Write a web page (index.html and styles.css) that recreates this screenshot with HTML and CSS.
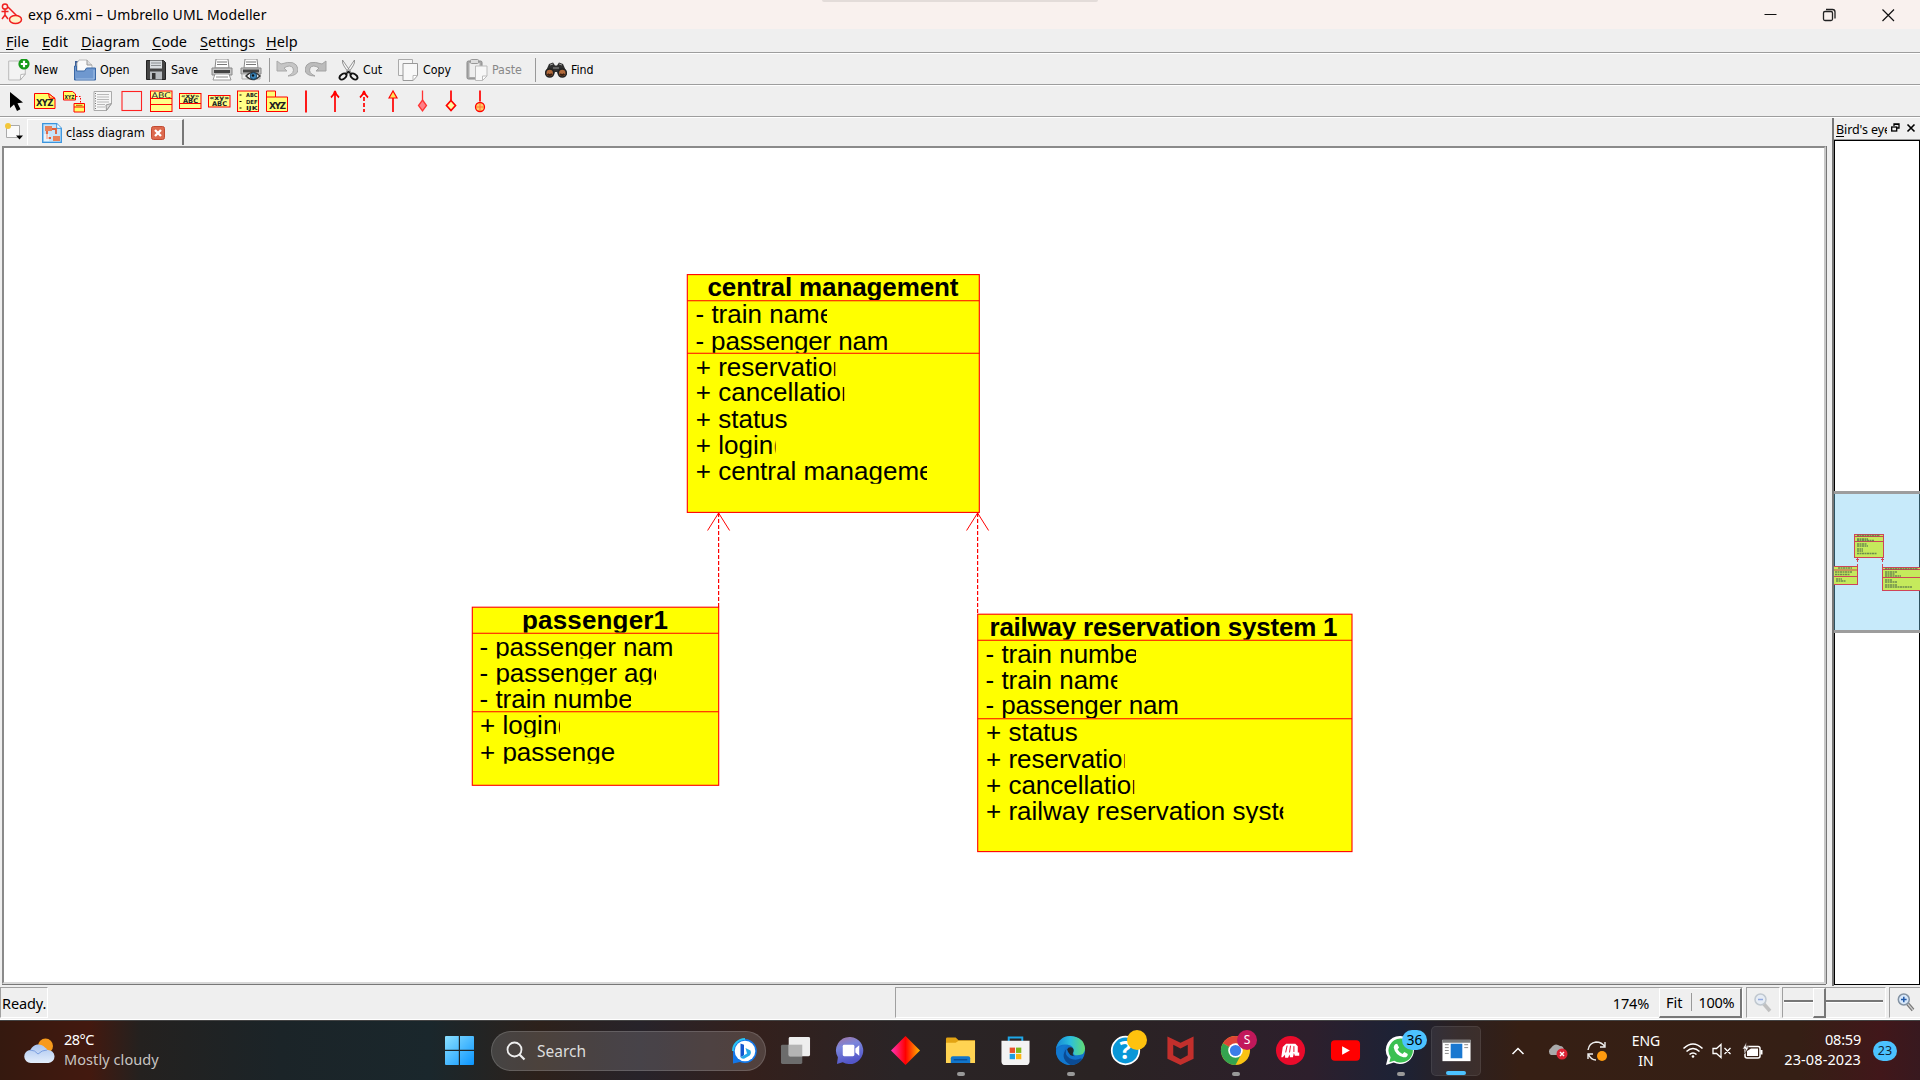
FILE: index.html
```html
<!DOCTYPE html>
<html lang="en">
<head>
<meta charset="utf-8">
<title>exp 6.xmi – Umbrello UML Modeller</title>
<link rel="stylesheet" href="styles.css">
</head>
<body>
<div class="window">
  <header class="titlebar">
    <svg class="app-icon" width="22" height="22" viewBox="0 0 22 22" fill="none" stroke="#f02020" stroke-width="1.5"><circle cx="4" cy="3.5" r="2.6"/><path d="M4 6v6M0.5 8.5h7M4 12l-3 4M4 12l3 4M7 4l9 9"/><ellipse cx="14.5" cy="16.5" rx="6" ry="4" fill="#fff2c8"/></svg>
    <span class="title-text">exp 6.xmi – Umbrello UML Modeller</span>
    <div class="drag-pill"></div>
    <div class="win-controls">
      <svg width="59" height="28" viewBox="0 0 59 28" stroke="#111" fill="none"><path d="M23.5 13.5h12"/></svg>
      <svg width="59" height="28" viewBox="0 0 59 28" stroke="#222" fill="none" stroke-width="1.3"><rect x="23.5" y="10.5" width="9" height="9" rx="1.5"/><path d="M26 8.5h6.500q2.500 0 2.500 2.500v6.500"/></svg>
      <svg width="59" height="28" viewBox="0 0 59 28" stroke="#111" fill="none" stroke-width="1.2"><path d="M23.500 8.500l11.500 11.500M35 8.500l-11.500 11.500"/></svg>
    </div>
  </header>
  <nav class="menubar">
    <span class="m-file"><u>F</u>ile</span><span class="m-edit"><u>E</u>dit</span><span class="m-diagram"><u>D</u>iagram</span><span class="m-code"><u>C</u>ode</span><span class="m-settings"><u>S</u>ettings</span><span class="m-help"><u>H</u>elp</span>
  </nav>
  <div class="toolbar main-tools">
    <div class="tool t-new"><svg width="22" height="22" viewBox="0 0 22 22"><path d="M.7 2h16.600v13l-5 6H.7z" fill="#f3f3f3" stroke="#bbb"/><path d="M17.300 15l-5 6 .5-5.500z" fill="#fff" stroke="#aaa" stroke-width=".8"/><circle cx="16" cy="5" r="5.600" fill="#159a18"/><path d="M16 1.800v6.400M12.800 5h6.400" stroke="#fff" stroke-width="2.200"/></svg><span>New</span></div>
    <div class="tool t-open"><svg width="22" height="22" viewBox="0 0 22 22"><path d="M1 2h8v6H1z" fill="#3c5f96"/><path d="M3 4l2-3h8l5 5v7H3z" fill="#fafafa" stroke="#bbb"/><path d="M13 1v5h5" fill="#ddd" stroke="#999"/><path d="M.5 21V7h2v5h8l2-3h9v12z" fill="#6f98cf" stroke="#3b68a5"/><path d="M2 20h18v-9" stroke="#a3c0e6" fill="none"/></svg><span>Open</span></div>
    <div class="tool t-save"><svg width="22" height="22" viewBox="0 0 22 22"><path d="M.5 1.500h17l2 2v17H.5z" fill="#444" stroke="#222"/><rect x="4" y="1.500" width="12" height="8" fill="#d9dde0"/><path d="M5 4h10M5 6.500h10" stroke="#8b8f92"/><rect x="4" y="12.500" width="12" height="8" fill="#b8bcc0"/><rect x="6" y="14" width="3.500" height="6" fill="#333"/></svg><span>Save</span></div>
    <div class="tool t-print"><svg width="22" height="22" viewBox="0 0 22 22"><path d="M5 0h12l1 9H4z" fill="#fff" stroke="#888"/><path d="M6 3h10M6 5.500h10" stroke="#777"/><path d="M1 9h20v7H1z" fill="#c5c5c5" stroke="#888"/><path d="M3 11h16v3H3z" fill="#444"/><path d="M4 15h14l2 6H2z" fill="#fff" stroke="#999"/><path d="M5 18h12" stroke="#888"/></svg></div>
    <div class="tool t-preview"><svg width="22" height="22" viewBox="0 0 22 22"><path d="M5 0h12l1 9H4z" fill="#fff" stroke="#888"/><path d="M6 3h10M6 5.500h10" stroke="#777"/><path d="M1 9h20v6H1z" fill="#c5c5c5" stroke="#888"/><path d="M3 10.500h16v3H3z" fill="#444"/><path d="M2 15h18v5H2z" fill="#eee" stroke="#aaa"/><path d="M6 17q7-7 14 0-7 7-14 0z" fill="#fff" stroke="#333" stroke-width="1.400"/><circle cx="13.500" cy="17" r="3.300" fill="#3e86b8" stroke="#174a70"/><circle cx="13" cy="16.500" r="1.200" fill="#111"/></svg></div>
    <div class="vsep s1"></div>
    <div class="tool t-undo"><svg width="22" height="22" viewBox="0 0 22 22"><path d="M1 2v10h10L8 9q6-4 9 0 2 5-5 8 10 0 10-7Q20 0 5 5z" fill="#c6c6c6" stroke="#a9a9a9"/></svg></div>
    <div class="tool t-redo"><svg width="22" height="22" viewBox="0 0 22 22"><path d="M21 2v10H11l3-3Q8 5 5 9q-2 5 5 8Q0 17 0 10 2 0 17 5z" fill="#bcbcbc" stroke="#a3a3a3"/></svg></div>
    <div class="tool t-cut"><svg width="22" height="22" viewBox="0 0 22 22"><path d="M4.500 1Q4 4 6 7l6 9 1.500-2zM16.500 1q.5 3-1.500 6l-6 9-1.500-2z" fill="#f7f7f7" stroke="#888" stroke-width=".9"/><ellipse cx="5" cy="17.500" rx="3.800" ry="2.400" transform="rotate(-35 5 17.500)" fill="none" stroke="#111" stroke-width="1.900"/><ellipse cx="16" cy="17.500" rx="3.800" ry="2.400" transform="rotate(35 16 17.500)" fill="none" stroke="#111" stroke-width="1.900"/><path d="M7.500 15.500l3-3 3 3" fill="none" stroke="#111" stroke-width="1.500"/></svg><span>Cut</span></div>
    <div class="tool t-copy"><svg width="22" height="22" viewBox="0 0 22 22"><path d="M.5.5h14v16H.5z" fill="#f6f6f6" stroke="#aaa"/><path d="M5 4.500h14.500v12l-4.500 5H5z" fill="#f8f8f8" stroke="#999"/><path d="M19.500 16.500l-4.500 5v-5z" fill="#fff" stroke="#aaa" stroke-width=".8"/></svg><span>Copy</span></div>
    <div class="tool t-paste"><svg width="22" height="22" viewBox="0 0 22 22"><rect x="1" y="2" width="15" height="18" rx="1.500" fill="#aaa" stroke="#888"/><path d="M3.500 4h10v14h-10z" fill="#eee"/><rect x="4.500" y=".5" width="8" height="4" rx="1" fill="#ddd" stroke="#999"/><path d="M9.500 7H21v10l-4.500 4.500h-7z" fill="#f7f7f7" stroke="#bbb"/><path d="M21 17l-4.500 4.500v-4.500z" fill="#fff" stroke="#bbb"/></svg><span class="off">Paste</span></div>
    <div class="vsep s2"></div>
    <div class="tool t-find"><svg width="22" height="22" viewBox="0 0 22 22"><path d="M4 5l4-1.500 2 3h2l2-3L18 5l3.500 8v3h-8l-1.500-3h-2l-1.500 3h-8v-3z" fill="#2f2f2f"/><path d="M5 6l3-1M14 5l3 1M8 9h6" stroke="#999"/><circle cx="4.700" cy="14" r="4" fill="#b36a3a" stroke="#222" stroke-width="1.600"/><circle cx="17.300" cy="14" r="4" fill="#b36a3a" stroke="#222" stroke-width="1.600"/><path d="M2.500 15q2 2 4.500 0M15 15q2 2 4.500 0" stroke="#3a2113" stroke-width="2" fill="none"/></svg><span>Find</span></div>
  </div>
  <div class="toolbar uml-tools">
    <svg viewBox="0 0 24 24"><path d="M6 3v16l4-3.500 3 6.500 3.500-1.700-3-6 5.500-.8z" fill="#000"/></svg>
    <svg viewBox="0 0 24 24"><path d="M1.500 4.500h14l6.500 5v10h-20.500z" fill="#ff6" stroke="#f00"/><path d="M15.500 4.500l1 4.500 5.500.5z" fill="#fff36b" stroke="#f00"/><text class="glyph" x="3" y="17" font-size="8.500" textLength="17.500">XYZ</text></svg>
    <svg viewBox="0 0 24 24"><path d="M1.500 2.500h9l3 2.500v6h-12z" fill="#ff6" stroke="#f00"/><text class="glyph" x="2.500" y="9.500" font-size="5.500" textLength="10" lengthAdjust="spacingAndGlyphs">XYZ</text><path d="M14 7.500h4.500v6" stroke="#f00" stroke-dasharray="1.500 1.500" fill="none"/><path d="M12 14.500h10.500v8.500h-10.500z" fill="#ff6" stroke="#f00"/><path d="M12 18h10.500" stroke="#f00"/><path d="M14 16.300h6.500" stroke="#a60"/></svg>
    <svg viewBox="0 0 24 24"><path d="M3 2.500h17.500v12l-5 7H3z" fill="#f6f6f6" stroke="#aaa"/><path d="M6 5.500h12M6 8h12M6 10.500h12M6 13h12M6 15.500h8M6 18h8" stroke="#aaa" stroke-width=".8"/><path d="M4.500 4v16" stroke="#777" stroke-dasharray="1 1.500"/><path d="M20.500 14.500l-5 7-.5-5.500z" fill="#ddd" stroke="#999"/></svg>
    <svg viewBox="0 0 24 24"><rect x="2" y="2.500" width="19.500" height="19" fill="none" stroke="#f22" stroke-width="1.100"/></svg>
    <svg viewBox="0 0 24 24"><rect x="1.500" y="2" width="21.500" height="20.500" fill="#ff8" stroke="#f00"/><text class="glyph thin" x="2.500" y="8.800" font-size="7.800" textLength="19.500" lengthAdjust="spacingAndGlyphs">ABC</text><path d="M1.500 9.500h21.500M1.500 15.500h21.500" stroke="#f00"/></svg>
    <svg viewBox="0 0 24 24"><rect x="1.500" y="4.500" width="21.500" height="15" fill="#ff8" stroke="#f00"/><text class="glyph" x="3" y="8.500" font-size="6" textLength="18.500" lengthAdjust="spacingAndGlyphs">«xy»</text><text class="glyph" x="5" y="13.500" font-size="6.500" textLength="15" lengthAdjust="spacingAndGlyphs">ABC</text><path d="M1.500 14.500h21.500" stroke="#f00"/></svg>
    <svg viewBox="0 0 24 24"><rect x="1.500" y="6.500" width="21.500" height="11.500" fill="#ff8" stroke="#f00"/><text class="glyph" x="2.500" y="11" font-size="6.500" textLength="19.500" lengthAdjust="spacingAndGlyphs">«xy»</text><text class="glyph" x="5" y="16.500" font-size="6.500" textLength="15" lengthAdjust="spacingAndGlyphs">ABC</text></svg>
    <svg viewBox="0 0 24 24"><rect x="1.500" y="2" width="21" height="20.500" fill="#ff8" stroke="#f00"/><g class="glyph" font-size="5.500"><text x="10" y="7.500" textLength="11.500" lengthAdjust="spacingAndGlyphs">ABC</text><text x="10" y="14.500" textLength="11.500" lengthAdjust="spacingAndGlyphs">DEF</text><text x="10" y="21" textLength="11.500" lengthAdjust="spacingAndGlyphs">IJK</text></g><path d="M3.500 6h2M3.500 12.500h2M3.500 19h2" stroke="#000"/></svg>
    <svg viewBox="0 0 24 24"><path d="M1.500 8V2h9v6h12v14.500H1.500V8h9" fill="#ffff73" stroke="#f00"/><text class="glyph" x="4" y="20" font-size="9" textLength="17">XYZ</text></svg>
    <svg viewBox="0 0 24 24"><path d="M12 1.500v22" stroke="#f00" stroke-width="1.800"/></svg>
    <svg viewBox="0 0 24 24" fill="none" stroke="#f00" stroke-width="1.700"><path d="M12 2v21M8 8.500Q11 6 12 2q1 4 4 6.500"/></svg>
    <svg viewBox="0 0 24 24" fill="none" stroke="#f00" stroke-width="1.700"><path d="M12 2v6M12 8v15" stroke-dasharray="4 2"/><path d="M8 8.500Q11 6 12 2q1 4 4 6.500"/></svg>
    <svg viewBox="0 0 24 24" fill="none" stroke="#f00" stroke-width="1.700"><path d="M12 8v15"/><path d="M8 9l4-7 4 7z" fill="#ffe45c" stroke-width="1.200"/></svg>
    <svg viewBox="0 0 24 24" fill="none" stroke="#f33" stroke-width="1.300"><path d="M12.500 1.500v10"/><path d="M12.500 11l4 5.500-4 5.500-4-5.500z" fill="#ff8088"/></svg>
    <svg viewBox="0 0 24 24" fill="none" stroke="#f00" stroke-width="1.700"><path d="M12 1.500v10"/><path d="M12 11.500l4.500 5-4.500 5-4.500-5z" fill="#fff9a0"/></svg>
    <svg viewBox="0 0 24 24" fill="none" stroke="#f00" stroke-width="1.700"><path d="M12 1.500v11"/><circle cx="12" cy="18" r="4.500" fill="#fc6" stroke-width="1.300"/><path d="M12 14v8M8 18h8" stroke="#f73" stroke-width="1"/></svg>
  </div>
  <main class="work">
    <section class="editor">
      <div class="tabs">
        <svg class="newtab" width="20" height="20" viewBox="0 0 20 20"><path d="M2.500 3.500h13v12h-13z" fill="#fafafa" stroke="#aaa"/><circle cx="4" cy="4" r="3" fill="#f3c73a"/><path d="M12 13.500h7l-3.500 4z" fill="#000"/></svg>
        <div class="tab">
          <svg width="20" height="20" viewBox="0 0 20 20"><path d="M.7.700h14l4.600 4.600v14H.7z" fill="#c6e4fa" stroke="#3a94dd" stroke-width="1.300"/><path d="M14.700.700v4.600h4.600" fill="#fff" stroke="#3a94dd"/><rect x="3" y="3" width="7" height="5" fill="#e8825a"/><rect x="11" y="13" width="7" height="5" fill="#e8825a"/><path d="M5 8v7h4M10 6h4v5" stroke="#e05f3a" stroke-width="1.800" fill="none"/><rect x="2" y="11" width="5" height="7" fill="#fff" opacity=".6"/></svg>
          <span class="tab-name">c<u>l</u>ass diagram</span>
          <svg class="close" width="14" height="14" viewBox="0 0 14 14"><rect x=".5" y=".5" width="13" height="13" rx="2" fill="#dd6a4e" stroke="#c24a32"/><path d="M4 4l6 6M10 4l-6 6" stroke="#fff" stroke-width="2.300"/></svg>
        </div>
      </div>
      <div class="canvas">
        <svg class="diagram" viewBox="4 148 1820 834" width="1820" height="834">
          <defs>
            <clipPath id="c1"><path d="M690 276h270v24H690zM690 302h137v24.500H690zM690 330h210v22.700H690zM690 355h145.300v24H690zM690 380h154.200v25H690zM690 407h130v24H690zM690 433h85.600v24.700H690zM690 461h237v22.700H690z"/></clipPath>
            <clipPath id="c2"><path d="M475 608h230v24.500H475zM475 635h198.500v23.500H475zM475 661h181v23.700H475zM475 687h156v23H475zM475 713h85v24.300h-85zM475 742h141v21.800H475z"/></clipPath>
            <clipPath id="c3"><path d="M980 615h365v24.500H980zM980 642h156v24H980zM980 669h137.300v23H980zM980 695h199v23H980zM980 721h120v23H980zM980 747h144.800v24H980zM980 773h154.200v24H980zM980 799h303.300v24H980z"/></clipPath>
          </defs>
          <g class="box"><rect x="687.300" y="274.600" width="292" height="237.800"/><path d="M687.300 300.700h292M687.300 353.300h292"/></g>
          <g class="box"><rect x="472.300" y="607.200" width="246.400" height="178.100"/><path d="M472.300 633.300h246.400M472.300 711.700h246.400"/></g>
          <g class="box"><rect x="977.700" y="614.200" width="374.300" height="237.400"/><path d="M977.700 640.200h374.300M977.700 718.800h374.300"/></g>
          <g class="link"><path class="dash" d="M718.600 513v94M977.600 513v101"/><path d="M707.600 530.500l11-17.500 11 17.500M966.600 530.500l11-17.500 11 17.500"/></g>
          <g class="txt" clip-path="url(#c1)">
            <text class="b" x="707.500" y="296" textLength="251">central management</text>
            <text x="695.500" y="322.700">- train name</text><text x="695.500" y="350" textLength="193">- passenger nam</text>
            <text x="695.800" y="375.700">+ reservation</text><text x="695.800" y="401.300">+ cancellation</text><text x="695.800" y="427.700">+ status</text><text x="695.800" y="454">+ login(</text><text x="695.800" y="480.300">+ central management</text>
          </g>
          <g class="txt" clip-path="url(#c2)">
            <text class="b" x="522" y="629" textLength="146">passenger1</text>
            <text x="479.500" y="655.700" textLength="194">- passenger nam</text><text x="479.500" y="681.700">- passenger age</text><text x="479.500" y="707.700">- train numbe</text>
            <text x="480" y="734">+ login(</text><text x="480" y="760.700">+ passenge</text>
          </g>
          <g class="txt" clip-path="url(#c3)">
            <text class="b" x="989.500" y="635.700" textLength="348">railway reservation system 1</text>
            <text x="985.500" y="662.700">- train numbe</text><text x="985.500" y="688.700">- train name</text><text x="985.500" y="714.300" textLength="193.500">- passenger nam</text>
            <text x="986" y="740.700">+ status</text><text x="986" y="767.700">+ reservation</text><text x="986" y="793.700">+ cancellation</text><text x="986" y="819.700">+ railway reservation system</text>
          </g>
        </svg>
      </div>
    </section>
    <aside class="dock">
      <div class="dock-title"><span class="dock-name"><u>B</u>ird's eye</span>
        <svg width="26" height="10" viewBox="0 0 26 10" fill="none" stroke="#000" stroke-width="1.300"><path d="M3 3V1h5v4H6M3 1.300h5"/><rect x=".7" y="4" width="5" height="4"/><path d="M16.500 1.500l7 7M23.500 1.500l-7 7" stroke-width="1.600"/></svg>
      </div>
      <div class="bird">
        <div class="view">
          <svg width="86" height="136" viewBox="1834 494 86 136">
            <g fill="#c5ea5c" stroke="#cf4558" stroke-width="1"><rect x="1854.500" y="534.500" width="29" height="23"/><path d="M1854.500 536.500h29M1854.500 541.500h29"/><rect x="1830" y="566.500" width="27.500" height="18"/><path d="M1834 570h23.500M1834 576.500h23.500"/><rect x="1882.500" y="567.500" width="40" height="23"/><path d="M1882.500 569.500h40M1882.500 577.500h40"/><path d="M1857.500 558v4M1856 559.500h3M1857.500 564v3M1882.500 558v4M1881 559.500h3M1882.500 564v4" fill="none"/></g>
            <g stroke="#58764a" stroke-width="1.500" stroke-dasharray="2 .5" opacity=".8"><path d="M1857 535.500h23M1857 539h11M1857 540.500h17M1857 544h10M1857 546h11M1857 549h6M1857 551h6M1857 553.500h20M1838 568h14M1835 572h17M1835 574.500h15M1836 579h6M1836 581h10M1885 568.700h33M1885 572h12M1885 574h10M1885 576h16M1885 580h7M1885 582h12M1885 585h12M1885 587h27"/></g>
          </svg>
        </div>
      </div>
    </aside>
  </main>
  <footer class="status">
    <div class="cell ready">Ready.</div>
    <div class="cell zoom"><span class="pct">174%</span><div class="btns"><span class="fit">Fit</span><span class="hundred">100%</span></div></div>
    <div class="cell mag"><svg width="18" height="20" viewBox="0 0 18 20" opacity=".45"><path d="M9 10l7 8" stroke="#888" stroke-width="3.500"/><circle cx="6.500" cy="6.500" r="5.500" fill="#dceafb" stroke="#89a" stroke-width="1.500"/><path d="M4 6.500h5" stroke="#25c" stroke-width="1.500"/></svg></div>
    <div class="cell slider"><div class="track"></div><div class="thumb"></div></div>
    <div class="cell mag last"><svg width="18" height="20" viewBox="0 0 18 20"><path d="M10 10l6 7" stroke="#777" stroke-width="3.500"/><path d="M10 10l6 7" stroke="#ccc" stroke-width="1.200"/><circle cx="6.800" cy="6.500" r="5.500" fill="#d8e8fa" stroke="#8493a3" stroke-width="1.500"/><path d="M4 6.500h5.600M6.800 3.700v5.600" stroke="#235aa8" stroke-width="1.500"/></svg></div>
  </footer>
</div>
<div class="taskbar">
  <div class="weather">
    <svg width="32" height="26" viewBox="0 0 32 26"><defs><linearGradient id="cl" x2="0" y2="1"><stop stop-color="#a9c4f0"/><stop offset="1" stop-color="#e4eefb"/></linearGradient></defs><circle cx="21.500" cy="8" r="7.500" fill="#f79a1c"/><path d="M7 25a6.500 6.500 0 0 1-.5-13A8.500 8.500 0 0 1 21 9.500q2 1 2.500 2.500a6.500 6.500 0 0 1 1 13z" fill="url(#cl)"/><path d="M6 12q5 0 8 4 4-4 9-4" fill="none" stroke="#7b9fe0"/></svg>
    <div class="wtext"><span class="temp">28°C</span><span class="cond">Mostly cloudy</span></div>
  </div>
  <svg class="start" width="29" height="29" viewBox="0 0 29 29"><defs><linearGradient id="wg" x2="1" y2="1"><stop stop-color="#8be0ff"/><stop offset="1" stop-color="#0a95ff"/></linearGradient></defs><path d="M0 1q0-1 1-1h12.800v13.800H0zM15 0h13q1 0 1 1v12.800H15zM0 15h13.800v14H1q-1 0-1-1zM15 15h14v13q0 1-1 1H15z" fill="url(#wg)"/></svg>
  <div class="search">
    <svg width="20" height="20" viewBox="0 0 20 20" fill="none" stroke="#eee" stroke-width="1.800"><circle cx="8.500" cy="8.500" r="7"/><path d="M13.500 13.500l5 5" stroke-width="2.200"/></svg>
    <span>Search</span>
    <svg class="bing" width="26" height="26" viewBox="0 0 26 26"><path d="M13 1a12 12 0 1 1-5 23L1 25.500V13A12 12 0 0 1 13 1z" fill="#1477e8"/><path d="M1 13A12 12 0 0 1 13 1" stroke="#28c3f5" stroke-width="2" fill="none"/><circle cx="13" cy="13" r="10.300" fill="#fff"/><path d="M8.500 5.500l3.500 1.300v10.500l-3.500 2z" fill="#1457d0"/><path d="M13.500 10l5 2.500q1.500 4-2.500 6l-4 2.300q-2.500 0-3.500-1.500l6.500-3.800z" fill="#26a8e8"/></svg>
  </div>
  <div class="apps">
    <div class="app"><svg viewBox="0 0 32 32"><rect x="1" y="10" width="22" height="20" rx="1.500" fill="#6c6c6c"/><rect x="9" y="2" width="22" height="20" rx="1.500" fill="#eee"/><rect x="9" y="10" width="14" height="12" fill="#b4b4b4"/></svg></div>
    <div class="app"><svg viewBox="0 0 32 32"><defs><linearGradient id="tg" x2=".3" y2="1"><stop stop-color="#a5749f"/><stop offset=".4" stop-color="#7a86dc"/><stop offset="1" stop-color="#5356c8"/></linearGradient></defs><path d="M16 2a14 14 0 1 1-8 26l-6 2 1-7A14 14 0 0 1 16 2z" fill="url(#tg)"/><rect x="8" y="10" width="12" height="12" rx="1.500" fill="#fff"/><path d="M21 14l4-3.500v11L21 18z" fill="#fff"/></svg></div>
    <div class="app"><svg viewBox="0 0 32 32"><defs><linearGradient id="dg"><stop stop-color="#f3b"/><stop offset=".5" stop-color="#f00"/><stop offset="1" stop-color="#fb0"/></linearGradient></defs><path d="M16 1l15 15-15 15L1 16z" fill="url(#dg)"/></svg></div>
    <div class="app run"><svg viewBox="0 0 32 32"><path d="M1 4q0-1.500 1.500-1.500H11l3 3h17v12H1z" fill="#e2a313"/><path d="M1 8h10l3-2h17v23H1z" fill="#ffd352"/><path d="M6 29v-5q0-2 2-2h16q2 0 2 2v5z" fill="#1176cc"/><path d="M9 25.500h14" stroke="#0a4f96" stroke-width="1.500"/></svg></div>
    <div class="app"><svg viewBox="0 0 32 32"><path d="M9 7V2.500h14V7" fill="none" stroke="#1da7e8" stroke-width="2"/><path d="M1.500 6h29v21q0 4-4 4h-21q-4 0-4-4z" fill="#f3f3f3"/><path d="M10 13h5.500v5.500H10z" fill="#e8502a"/><path d="M16.500 13H22v5.500h-5.500z" fill="#7fb81b"/><path d="M10 19.500h5.500V25H10z" fill="#1b9de2"/><path d="M16.500 19.500H22V25h-5.500z" fill="#fbb611"/></svg></div>
    <div class="app run"><svg viewBox="0 0 32 32"><defs><linearGradient id="eg"><stop stop-color="#1687d8"/><stop offset=".5" stop-color="#2cc0dc"/><stop offset="1" stop-color="#62dc72"/></linearGradient></defs><circle cx="16" cy="16" r="15" fill="#1272cc"/><path d="M1 14Q4 1 16 1q14 1 15 13 0 7-8 7-5 0-4-4 1-6-6-7Q5 9 1 14z" fill="url(#eg)"/><path d="M13 10Q6 15 11 24q4 6 12 5-5 2-7 2Q3 30 1 18q0-7 12-8z" fill="#1278cf"/><path d="M12 14q-3 6 3 10 6 3 12 0l1 1q-4 6-12 6Q4 24 12 14z" fill="#0b4b94"/><path d="M12.500 15q1-3 5-2 3 2 1 5.500-1 2 2 3.500-6 0-8-7z" fill="#22272e"/></svg></div>
    <div class="app"><svg viewBox="0 0 32 32"><circle cx="16" cy="16" r="14.200" fill="#0997d8" stroke="#fff" stroke-width="1.800"/><text x="16" y="25" text-anchor="middle" class="qmark">?</text></svg><i class="dot-badge"></i></div>
    <div class="app"><svg viewBox="0 0 32 32"><path d="M2.500 1.500L16 8l13.500-6.500v23L16 31 2.500 24.500zM8.500 10v11l7.500 4 7.500-4V10L16 14z" fill="#c22f2c" fill-rule="evenodd"/></svg></div>
    <div class="app run"><svg viewBox="0 0 32 32"><circle cx="16" cy="16" r="15" fill="#f9c313"/><path d="M16 16L3 8.500A15 15 0 0 1 29 8.500H16z" fill="#de4436"/><path d="M3 8.500A15 15 0 0 0 16 31l6-11.500-6-3.500z" fill="#34a34f"/><circle cx="16" cy="16" r="7.500" fill="#fff"/><circle cx="16" cy="16" r="5.800" fill="#3b7de8"/></svg><i class="s-badge">S</i></div>
    <div class="app"><svg viewBox="0 0 32 32"><circle cx="16" cy="16" r="15" fill="#ea0b2b"/><path d="M8 12.500l3.500-3.500h9.500l2.500 2.500v6.500h1.500v3.500h-4.500l-1-3-1 4.500h-3l-.5-3-1.500 3.500h-3l-.2-3-2.300 2.500H6.500z" fill="#fff"/><path d="M12.500 11l-1.500 7M16 11l-1 7M19.500 11.500v6" stroke="#ea0b2b"/></svg></div>
    <div class="app"><svg viewBox="0 0 32 32"><rect x="1" y="5.500" width="30" height="21" rx="4" fill="#f00"/><path d="M12.500 11.500v9l8-4.500z" fill="#fff"/></svg></div>
    <div class="app run"><svg viewBox="0 0 32 32"><path d="M16 1a14.500 14.500 0 1 1-7 27.500L1 31l2-8A14.500 14.500 0 0 1 16 1z" fill="#fff"/><path d="M16 3.500a12.500 12.500 0 1 1-6.500 23L4.500 28l1.300-5A12.500 12.500 0 0 1 16 3.500z" fill="#3bc052"/><path d="M10.500 9.500l2-.5 2 4-1.500 2q2 3.500 5 4.500l2-2 3.500 2q0 4-4.500 3.500Q10.500 21 9 13q0-2 1.500-3.500z" fill="#fff"/></svg><i class="n-badge">36</i></div>
    <div class="app active"><svg viewBox="0 0 32 32"><path d="M1.500 5h29v22h-29z" fill="#fff"/><path d="M1.500 5h29v3h-29z" fill="#777"/><rect x="10" y="9" width="12" height="15" fill="#1a78d0"/><path d="M4 10h4M4 13h4M4 16h4M4 19h4M24 10h4M24 13h4" stroke="#888"/></svg></div>
  </div>
  <div class="tray">
    <svg class="chev" width="14" height="10" viewBox="0 0 14 10" fill="none" stroke="#fff" stroke-width="1.500"><path d="M1.500 8L7 2.500 12.500 8"/></svg>
    <svg class="cloud" width="22" height="18" viewBox="0 0 22 18"><path d="M4 13a4 4 0 0 1 0-7Q8 0 13 4q4 0 4 5v4z" fill="#aaa"/><circle cx="15" cy="12" r="5.500" fill="#dc2434"/><path d="M13 10l4 4M17 10l-4 4" stroke="#fff" stroke-width="1.400"/></svg>
    <svg class="sync" width="22" height="22" viewBox="0 0 22 22" fill="none" stroke="#eee" stroke-width="1.400"><path d="M2 10Q3 3 10 2q6 0 9 5M19 2v5h-5M2 19v-5h5M2.500 14.500Q5 20 10 20"/><circle cx="16" cy="16" r="5" fill="#ff9b0f" stroke="none"/></svg>
    <div class="lang"><span>ENG</span><span>IN</span></div>
    <svg class="wifi" width="22" height="17" viewBox="0 0 22 17" fill="none" stroke="#fff" stroke-width="1.600"><path d="M1.500 6.500q9.500-9 19 0M4.500 9.500q6.500-6 13 0M7.500 12.500q3.500-3 7 0"/><circle cx="11" cy="14.500" r="1.300" fill="#fff" stroke="none"/></svg>
    <svg class="vol" width="20" height="16" viewBox="0 0 20 16" fill="none" stroke="#fff" stroke-width="1.300"><path d="M1 5.500h3.500L9 1.500v13L4.500 10.500H1zM12.500 5l6 6M18.500 5l-6 6"/></svg>
    <svg class="batt" width="22" height="18" viewBox="0 0 22 18"><rect x="3" y="4.500" width="15" height="11.500" rx="2" fill="none" stroke="#fff" stroke-width="1.500"/><path d="M5 14V9l4-2.500h7V14z" fill="#fff"/><path d="M19.500 8v4.500" stroke="#fff" stroke-width="2"/><path d="M4.500 0L.5 7h3l-1 5 4.500-7H4z" fill="#fff" stroke="#35201a" stroke-width=".6"/></svg>
    <div class="clock"><span class="time">08:59</span><span class="date">23-08-2023</span></div>
    <i class="count">23</i>
  </div>
</div>
</body>
</html>
```
FILE: styles.css
```css
* { box-sizing: border-box; }
body { margin: 0; width: 1920px; height: 1080px; overflow: hidden; display: flex; flex-direction: column; background: #efefef; color: #000; font-family: "Noto Sans", "Open Sans", sans-serif; }
svg { display: block; flex: none; }
i { font-style: normal; }
u { text-underline-offset: 2px; text-decoration-thickness: 1px; }
span { white-space: nowrap; }
.window { height: 1020px; display: flex; flex-direction: column; }

.titlebar { height: 29px; flex: none; position: relative; display: flex; align-items: center; background: #f9f1ee; padding-left: 1px; }
.app-icon { margin-top: -1px; }
.title-text { font-size: 14px; margin-left: 5px; letter-spacing: 0.12px; flex: 1; }
.drag-pill { position: absolute; left: 822px; top: 0; width: 276px; height: 2px; background: #e3dcd9; border-radius: 0 0 4px 4px; }
.win-controls { display: flex; margin-right: 2px; }

.menubar { height: 25px; flex: none; display: flex; align-items: center; font-size: 14.5px; padding-left: 6px; padding-bottom: 1px; border-bottom: 1px solid #fff; box-shadow: inset 0 -1px #9d9d9d; }
.menubar span { flex: none; }
.m-file { width: 36px; }
.m-edit { width: 39px; }
.m-diagram { width: 71px; }
.m-code { width: 48px; }
.m-settings { width: 66px; }

.toolbar { height: 32px; flex: none; display: flex; align-items: center; border-bottom: 1px solid #fff; box-shadow: inset 0 -1px #9d9d9d; }
.main-tools { padding-left: 8px; font: 12.3px "DejaVu Sans Condensed", "DejaVu Sans", sans-serif; font-stretch: condensed; }
.tool { display: flex; align-items: center; gap: 4px; flex: none; }
.t-new { width: 66px; }
.t-open { width: 72px; }
.t-save { width: 65px; gap: 3px; }
.t-print, .t-preview { width: 29px; }
.t-undo { width: 29px; }
.t-redo { width: 33px; }
.t-cut { width: 60px; gap: 3px; }
.t-copy { width: 68px; gap: 3px; }
.t-paste { width: 69px; }
.off { color: #888; }
.vsep { height: 24px; border-left: 1px solid #999; flex: none; }
.s1 { width: 7px; }
.s2 { width: 10px; }
.uml-tools { padding-left: 4px; gap: 5px; }
.uml-tools svg { width: 24px; height: 24px; margin-top: -1px; }
.glyph { font-family: "DejaVu Sans", sans-serif; font-weight: bold; fill: #222; }
.thin { font-weight: normal; }

.work { height: 868px; flex: none; display: flex; }
.editor { width: 1828px; display: flex; flex-direction: column; }
.tabs { height: 28px; flex: none; display: flex; padding-left: 4px; align-items: stretch; }
.newtab { margin-top: 4px; }
.tab { width: 157px; margin: 1px 0 1px 3px; padding-left: 14px; display: flex; align-items: center; border-left: 1px solid #fff; border-top: 1px solid #fff; border-right: 2px solid #777; font: 12.6px "DejaVu Sans Condensed", "DejaVu Sans", sans-serif; font-stretch: condensed; }
.tab-name { margin-left: 4px; width: 85px; }
.canvas { width: 1824px; height: 838px; margin-left: 2px; background: #fff; border: 2px solid #8a8a8a; border-right-color: #c8c8c8; border-bottom-color: #d8d8d8; overflow: hidden; box-shadow: 0 1px #777, 1px 0 #777; }
.box { fill: #ff0; stroke: #f00; stroke-width: 1.1; }
.link { fill: none; stroke: #f00; stroke-width: 1; }
.dash { stroke-dasharray: 4 2; stroke-width: 1.2; }
.txt { font: 26px "Liberation Sans", Arial, sans-serif; }
.b { font-weight: bold; }

.dock { flex: 1; margin-left: 4px; border-left: 2px solid #777; display: flex; flex-direction: column; }
.dock-title { height: 22px; display: flex; align-items: center; padding-left: 2px; font-size: 12.5px; box-shadow: inset 0 -1px #999; }
.dock-name { width: 51px; overflow: hidden; margin-right: 4px; letter-spacing: -0.1px; }
.dock-title svg { margin-top: -3px; }
.bird { height: 845px; background: #fff; border: 1px solid #000; padding-top: 350px; }
.view { height: 142px; margin: 0 -1px; border-top: 3px solid #9d9d9d; border-bottom: 3px solid #9d9d9d; background: #c7eafa; overflow: hidden; box-shadow: inset 1px 0 #2e5260, inset -1px 0 #2e5260; }

.status { height: 34px; flex: none; display: flex; align-items: stretch; padding: 1px 0 2px; background: #efefef; font-size: 14.5px; box-shadow: inset 0 -1px #fff; }
.cell { flex: none; border: 1px solid #a0a0a0; border-right-color: #fff; border-bottom-color: #fff; display: flex; align-items: center; }
.ready { width: 48px; padding-left: 1px; letter-spacing: -0.1px; }
.zoom { margin-left: 847px; width: 848px; justify-content: flex-end; }
.pct { margin-right: 10px; letter-spacing: -0.2px; }
.btns { height: 30px; width: 83px; border: 1px solid #fff; border-right: 2px solid #777; border-bottom: 2px solid #777; display: flex; align-items: center; }
.fit { padding: 0 8px 0 6px; border-right: 1px solid #999; line-height: 18px; }
.hundred { padding-left: 7px; letter-spacing: -0.3px; }
.mag { width: 34px; margin-left: 3px; justify-content: center; }
.slider { width: 104px; margin-left: 2px; position: relative; padding-left: 1px; }
.track { width: 99px; height: 3px; background: #777; border-bottom: 1px solid #fff; margin-top: -2px; }
.thumb { position: absolute; left: 30px; top: 0; width: 13px; height: 30px; background: #f0f0f0; border: 1px solid #fff; border-right: 2px solid #777; border-bottom: 2px solid #777; }
.mag.last { width: 32px; border-right: 0; }

.taskbar { height: 60px; flex: none; border-top: 1px solid #444; display: flex; align-items: center; color: #fff; background: linear-gradient(90deg, #35190f 0, #43190f 90px, #24211f 140px, #1b2428 280px, #1a272c 430px, #2d211b 540px, #27232a 640px, #34201c 750px, #2a2426 900px, #2a2323 1100px, #2d1f2c 1310px, #1c2236 1400px, #2b2020 1460px, #361f14 1520px, #351f15 1800px, #41171a 1880px, #38191f 1920px); }
.weather { width: 445px; padding-left: 24px; display: flex; align-items: center; gap: 8px; }
.wtext { display: flex; flex-direction: column; font-size: 14.5px; line-height: 20px; margin-top: -3px; }
.cond { color: #c8c4c2; letter-spacing: 0.08px; }
.temp { letter-spacing: -0.5px; }
.search { width: 275px; height: 40px; margin-left: 17px; border-radius: 20px; background: rgba(255,255,255,.15); border: 1px solid rgba(255,255,255,.15); display: flex; align-items: center; padding: 0 7px 0 14px; font-size: 15.5px; }
.search span { flex: 1; margin-left: 11px; color: #ddd; }
.apps { display: flex; margin-left: 2px; }
.app { width: 55px; height: 50px; position: relative; display: flex; align-items: center; justify-content: center; }
.app > svg { width: 31px; height: 31px; }
.app.run::after, .app.active::after { content: ""; position: absolute; bottom: 0; left: 24px; width: 8px; height: 4px; border-radius: 2px; background: #999; }
.app.active { width: 50px; margin-left: 3px; background: rgba(255,255,255,.07); border: 1px solid rgba(255,255,255,.08); border-radius: 5px; }
.app.active::after { left: 14px; width: 20px; background: #4cc2ff; bottom: 0; }
.qmark { font: bold 26px "Open Sans", sans-serif; fill: #fff; }
.dot-badge, .s-badge, .n-badge { position: absolute; top: 4px; left: 29px; width: 20px; height: 20px; border-radius: 10px; background: #ffc20e; font-size: 12px; line-height: 20px; text-align: center; }
.s-badge { background: #c2185b; }
.n-badge { width: 25px; background: #4cc2ff; color: #000; font-size: 14px; }
.tray { flex: 1; display: flex; align-items: center; font-size: 14.5px; line-height: 20px; }
.chev { margin-left: 30px; }
.cloud { margin-left: 22px; }
.sync { margin-left: 17px; }
.lang { width: 34px; margin-left: 21px; display: flex; flex-direction: column; align-items: center; font-size: 14px; }
.wifi { margin-left: 19px; }
.vol { margin-left: 8px; }
.batt { margin-left: 10px; }
.clock { width: 97px; display: flex; flex-direction: column; align-items: flex-end; margin-top: -3px; }
.time { letter-spacing: -0.2px; }
.date { letter-spacing: 0.1px; }
.count { width: 24px; height: 20px; border-radius: 10px; background: #4cc2ff; color: #123; font-size: 12.5px; text-align: center; margin-left: 12px; }
```
